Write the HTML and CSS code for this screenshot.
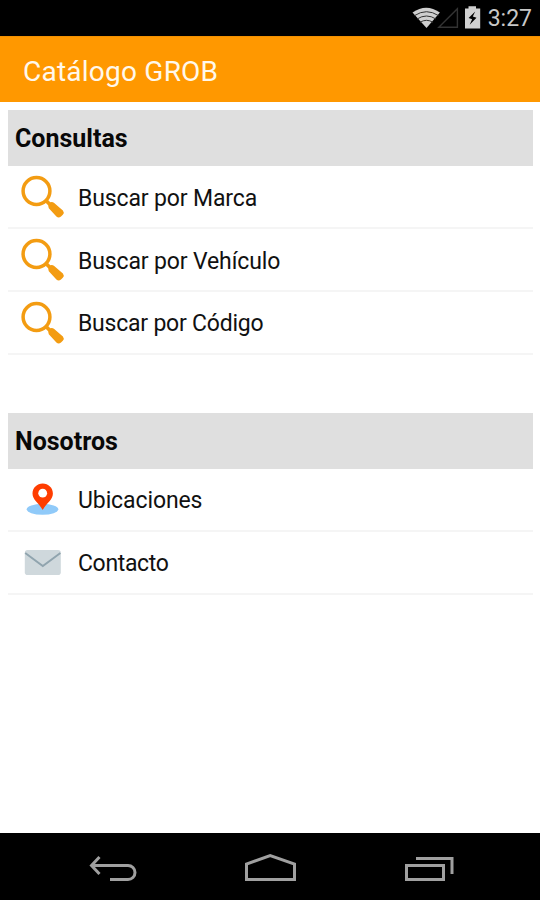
FILE: index.html
```html
<!DOCTYPE html>
<html lang="es">
<head>
<meta charset="utf-8">
<title>Catálogo GROB</title>
<link rel="stylesheet" href="styles.css">
</head>
<body>
<svg class="defs" width="0" height="0">
  <symbol id="search" viewBox="0 0 48 48">
    <circle cx="18.5" cy="18" r="13.4" fill="none" stroke="#f39c12" stroke-width="3.5"/>
    <path d="M28 27.5l5 5" stroke="#f39c12" stroke-width="3.8"/>
    <path d="M31.4 30q2.4-2 4.8 0l8.7 7.6q1.7 1.9-.1 4.2l-1.8 1.8q-2.4 1.7-4.6 0l-7.6-8.4q-1.2-2.2.6-5.2z" fill="#f39c12"/>
  </symbol>
</svg>
<div class="screen">
  <div class="status">
    <svg width="76" height="36" viewBox="410 0 76 36">
      <path d="M412.5 12.6q13.7-9.8 27.4 0L426.5 28z" fill="#cfcfcf"/>
      <path d="M414.5 15.6q12-7.8 24 0M417 19q9.5-6 19 0M420 22.3q6.5-4 13 0" fill="none" stroke="#333" stroke-width="1"/>
      <path d="M438.8 27.2h18.6V8.8z" fill="none" stroke="#333" stroke-width="1.4"/>
      <path d="M465 8.5h3.5V6.3h7.5v2.2h4.2v20H465z" fill="#d0d0d0"/>
      <path d="M475.2 11.5l-6.6 6.6 3.5 1.2-2.4 5.4 6.8-7-3.7-1.2z" fill="#000"/>
    </svg>
    <span class="clock">3:27</span>
  </div>
  <header class="bar"><span>Catálogo GROB</span></header>
  <main>
    <h2 class="heading">Consultas</h2>
    <ul>
      <li><svg><use href="#search"/></svg><span class="marca">Buscar por Marca</span></li>
      <li><svg><use href="#search"/></svg><span class="vehiculo">Buscar por Vehículo</span></li>
      <li><svg><use href="#search"/></svg><span class="codigo">Buscar por Código</span></li>
    </ul>
    <h2 class="heading second">Nosotros</h2>
    <ul>
      <li><svg viewBox="0 0 48 48">
        <ellipse cx="24.5" cy="33.3" rx="15.8" ry="5.5" fill="#90caf9"/>
        <path d="M24.7 7.4c-5.7 0-10.2 4.4-10.2 10 0 6.8 6.3 8.8 10.2 16.6 3.9-7.8 10.2-9.8 10.2-16.6 0-5.6-4.5-10-10.2-10z" fill="#ff3d00"/>
        <circle cx="24.7" cy="17.2" r="4.4" fill="#fff"/>
      </svg><span class="ubicaciones">Ubicaciones</span></li>
      <li><svg viewBox="0 0 48 48">
        <rect x="6.8" y="11.1" width="36" height="25" rx="2.8" fill="#cfd8dc"/>
        <path d="M7.2 14l17.6 13 17.6-13" fill="none" stroke="#90a4ae" stroke-width="1.9"/>
      </svg><span class="contacto">Contacto</span></li>
    </ul>
  </main>
  <nav>
    <svg width="540" height="67" viewBox="0 833 540 67" fill="none" stroke="#a0a0a0" stroke-width="3">
      <path d="M91.5 865.5h36.5a6.9 6.9 0 0 1 0 14H110M99.5 857l-8 8.5 8 8.5"/>
      <path d="M246.5 879.5V864l23.7-8.5 24.3 8.5v15.5z"/>
      <path d="M406.5 865.5h37v14h-37zM416 858.5h36v15.5"/>
    </svg>
  </nav>
</div>
</body>
</html>
```
FILE: styles.css
```css
* { box-sizing: border-box; }
body { margin: 0; font-family: Roboto, "Liberation Sans", sans-serif; background: #fff; color: #111; }
.defs { display: block; height: 0; }
.screen { width: 540px; height: 900px; display: flex; flex-direction: column; overflow: hidden; }
.status { height: 36px; flex: none; background: #000; display: flex; justify-content: flex-end; padding-right: 8px; }
.status svg { margin-right: 2px; }
.clock { color: #c8c8c8; font-size: 23px; line-height: 38px; }
.bar { height: 66px; flex: none; background: #ff9800; border-top: 1px solid #f29000; color: #fff8ec; padding-left: 23px; font-size: 28px; line-height: 69px; letter-spacing: .23px; }
main { flex: 1; padding: 8px 7px 0 8px; }
.heading { margin: 0; height: 56px; background: #dfdfdf; padding-left: 7px; font-size: 25px; font-weight: 700; line-height: 57px; color: #080808; }
.second { margin-top: 58px; }
ul { margin: 0; padding: 0; list-style: none; }
li { height: 63px; display: flex; align-items: center; padding-left: 10px; border-bottom: 2px solid #f5f5f5; font-size: 23px; }
li svg { width: 48px; height: 48px; margin-right: 12px; flex: none; }
li span { padding-top: 2px; }
.marca { letter-spacing: -.13px; padding-top: 4px; }
.vehiculo { letter-spacing: -.13px; padding-top: 3px; }
.codigo { letter-spacing: -.22px; }
.ubicaciones { letter-spacing: -.1px; }
.contacto { letter-spacing: -.35px; }
nav { height: 67px; flex: none; background: #000; }
nav svg { display: block; }
```
